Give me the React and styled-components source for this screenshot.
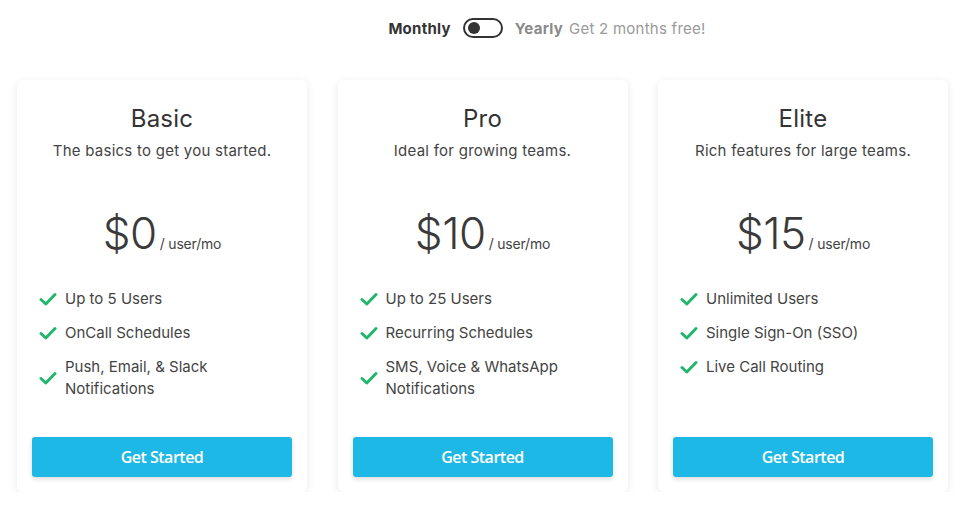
import React, { useState } from 'react';
import styled, { createGlobalStyle } from 'styled-components';

const GlobalStyle = createGlobalStyle`
    body {
        margin: 0;
        background: #fff;
        font-family: Inter, "Noto Sans", sans-serif;
        color: #444;
        letter-spacing: 0.25px;
    }
`

const Page = styled.div`
    width: 966px;
    padding: 17px 0 0;
    box-sizing: border-box;
`

const Switcher = styled.div`
    display: flex;
    align-items: center;
    justify-content: center;
    gap: 12px;
    height: 22px;
    padding-left: 128px;
    font-size: 15px;
`

const PeriodLabel = styled.span`
    font-weight: 700;
    color: ${props => props.active ? '#333' : '#8a8a8a'};
`

const Promo = styled.span`
    color: #999;
    margin-left: -6px;
`

const Toggle = styled.button`
    position: relative;
    width: 40px;
    height: 20px;
    border: 2px solid #333;
    border-radius: 10px;
    background: #fff;
    padding: 0;
    cursor: pointer;

    &::after {
        content: '';
        position: absolute;
        top: 2px;
        left: ${props => props.on ? '22px' : '3px'};
        width: 12px;
        height: 12px;
        border-radius: 50%;
        background: #333;
    }
`

const Cards = styled.div`
    display: grid;
    grid-template-columns: repeat(3, 290px);
    gap: 30.5px;
    padding: 41px 0 0 17px;
`

const Card = styled.div`
    background: #fff;
    border-radius: 6px;
    box-shadow: 0 2px 10px rgba(0, 0, 0, 0.09);
    height: 412px;
    padding: 24px 15px 15px;
    box-sizing: border-box;
    display: flex;
    flex-direction: column;
`

const Title = styled.h2`
    margin: 0;
    text-align: center;
    font-size: 24px;
    font-weight: 400;
    color: #333;
    line-height: 30px;
`

const Subtitle = styled.p`
    margin: 6px 0 0;
    text-align: center;
    font-size: 15px;
    line-height: 22px;
    color: #444;
`

const Price = styled.div`
    margin-top: 43px;
    display: flex;
    justify-content: center;
    align-items: baseline;
    color: #3a3a3a;
`

const Amount = styled.span`
    font-size: 44px;
    font-weight: 300;
    line-height: 56px;
    letter-spacing: -0.5px;
`

const Unit = styled.span`
    font-size: 14px;
    margin-left: 3px;
    color: #444;
    letter-spacing: -0.2px;
`

const Features = styled.ul`
    list-style: none;
    margin: 27px 0 0;
    padding: 0 0 0 7px;
    display: flex;
    flex-direction: column;
    gap: 12px;
`

const Feature = styled.li`
    display: flex;
    align-items: center;
    gap: 8px;
    font-size: 15px;
    line-height: 22px;
    color: #444;
    letter-spacing: 0;
    padding-right: 20px;
`

const Check = styled.svg`
    flex: none;
    width: 18px;
    height: 18px;
`

const Button = styled.button`
    margin-top: auto;
    height: 40px;
    width: 100%;
    border: none;
    border-radius: 3px;
    background: #1eb8e7;
    color: #fff;
    font-family: "Open Sans", sans-serif;
    font-weight: 600;
    font-size: 16px;
    letter-spacing: -0.5px;
    box-shadow: 0 2px 5px rgba(0, 0, 0, 0.15);
    cursor: pointer;
`

const plans = [
    {
        name: 'Basic',
        tagline: 'The basics to get you started.',
        price: '$0',
        features: ['Up to 5 Users', 'OnCall Schedules', 'Push, Email, & Slack Notifications'],
    },
    {
        name: 'Pro',
        tagline: 'Ideal for growing teams.',
        price: '$10',
        features: ['Up to 25 Users', 'Recurring Schedules', 'SMS, Voice & WhatsApp Notifications'],
    },
    {
        name: 'Elite',
        tagline: 'Rich features for large teams.',
        price: '$15',
        features: ['Unlimited Users', 'Single Sign-On (SSO)', 'Live Call Routing'],
    },
]

const CheckIcon = () => (
    <Check viewBox="0 0 18 18">
        <path d="M2 9.5 L6.8 14 L16 4.5" fill="none" stroke="#21b66b" strokeWidth="3" strokeLinecap="round" strokeLinejoin="round" />
    </Check>
)

function App() {
    const [yearly, setYearly] = useState(false);

    return (
        <Page>
            <GlobalStyle />
            <Switcher>
                <PeriodLabel active={!yearly}>Monthly</PeriodLabel>
                <Toggle on={yearly} onClick={() => setYearly(!yearly)} />
                <PeriodLabel active={yearly}>Yearly</PeriodLabel>
                <Promo>Get 2 months free!</Promo>
            </Switcher>
            <Cards>
                {plans.map(plan => (
                    <Card key={plan.name}>
                        <Title>{plan.name}</Title>
                        <Subtitle>{plan.tagline}</Subtitle>
                        <Price>
                            <Amount>{plan.price}</Amount>
                            <Unit>/ user/mo</Unit>
                        </Price>
                        <Features>
                            {plan.features.map(f => (
                                <Feature key={f}>
                                    <CheckIcon />
                                    <span>{f}</span>
                                </Feature>
                            ))}
                        </Features>
                        <Button>Get Started</Button>
                    </Card>
                ))}
            </Cards>
        </Page>
    );
}

export default App;
